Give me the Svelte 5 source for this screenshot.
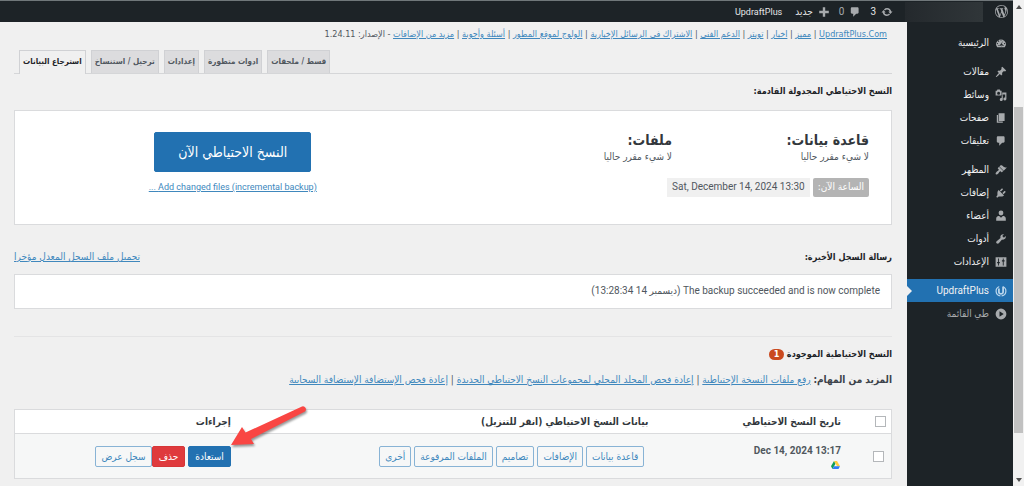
<script>
  const menu = [
    [{ label: 'الرئيسية', icon: 'dashboard' }],
    [
      { label: 'مقالات', icon: 'pin' },
      { label: 'وسائط', icon: 'media' },
      { label: 'صفحات', icon: 'pages' },
      { label: 'تعليقات', icon: 'comment' }
    ],
    [
      { label: 'المظهر', icon: 'brush' },
      { label: 'إضافات', icon: 'plug' },
      { label: 'أعضاء', icon: 'user' },
      { label: 'أدوات', icon: 'wrench' },
      { label: 'الإعدادات', icon: 'sliders' }
    ],
    [
      { label: 'UpdraftPlus', icon: 'updraft', current: true },
      { label: 'طي القائمة', icon: 'collapse', muted: true }
    ]
  ];
  const topLinks = [
    'UpdraftPlus.Com', 'مميز', 'اخبار', 'تويتر', 'الدعم الفني',
    'الاشتراك في الرسائل الإخبارية', 'الولوج لموقع المطور', 'أسئلة وأجوبة', 'مزيد من الإضافات'
  ];
  const tabs = ['استرجاع البيانات', 'ترحيل / استنساخ', 'إعدادات', 'ادوات متطورة', 'قسط / ملحقات'];
  const tasks = [
    'رفع ملفات النسخة الإحتياطية',
    'إعادة فحص المجلد المحلي لمجموعات النسخ الاحتياطي الجديدة',
    'إعادة فحص الإستضافة الإستضافة السحابية'
  ];
  const parts = ['قاعدة بيانات', 'الإضافات', 'تصاميم', 'الملفات المرفوعة', 'أخرى'];
</script>

{#snippet icon(name)}
  <svg class="icon" viewBox="0 0 20 20" aria-hidden="true">
    {#if name === 'dashboard'}
      <path fill-rule="evenodd" d="M3.76 17h12.48A8 8 0 1 0 3.76 17zM10 4a1 1 0 1 1 0 2 1 1 0 0 1 0-2zM6 6a1 1 0 1 1 0 2 1 1 0 0 1 0-2zm8 0-3 5.3A2 2 0 1 1 9.2 12zM4 10a1 1 0 1 1 0 2 1 1 0 0 1 0-2zm12 0a1 1 0 1 1 0 2 1 1 0 0 1 0-2zM5 15h10v-1H5z" />
    {:else if name === 'pin'}
      <path d="M10.44 3.02l1.82-1.82 6.36 6.35-1.83 1.82c-1.05-.68-2.48-.57-3.41.36l-.75.75c-.92.93-1.04 2.35-.35 3.41l-1.83 1.82-2.41-2.41-2.8 2.79c-.42.42-3.38 2.71-3.8 2.29s1.86-3.39 2.28-3.81l2.79-2.79L4.1 9.36l1.83-1.82c1.05.69 2.48.57 3.4-.36l.75-.75c.93-.92 1.05-2.35.36-3.41z" />
    {:else if name === 'media'}
      <path fill-rule="evenodd" d="M1 3h2l1-2h4l1 2h2v8H1zm5 1.5a2.500 2.500 0 1 0 0 5 2.500 2.500 0 0 0 0-5zM12 6h7v10.500a2.500 2.500 0 1 1-2-2.400V9h-4v8.500a2.500 2.500 0 1 1-2-2.400V12h1z" />
    {:else if name === 'pages'}
      <path d="M6 15V2h10v13zM5 16h8v2H3V5h2z" />
    {:else if name === 'comment'}
      <path d="M5 2h9c1.100 0 2 .9 2 2v7c0 1.100-.9 2-2 2h-2l-5 5v-5H5c-1.100 0-2-.9-2-2V4c0-1.100.9-2 2-2z" />
    {:else if name === 'brush'}
      <path d="M14.480 11.060 7.410 3.990l1.500-1.500c.5-.56 2.300-.47 3.510.32 1.210.8 1.430 1.280 2.910 2.100 1.180.64 2.450 1.260 4.450.85zm-.71.71L6.700 4.700 4.930 6.470c-.39.39-.39 1.020 0 1.410l1.060 1.060c.39.39.39 1.030 0 1.420-.6.6-1.430 1.110-2.210 1.690-.35.26-.7.53-1.010.84C1.430 14.230.4 16.080 1.400 17.070c.99 1 2.840-.03 4.180-1.360.31-.31.58-.66.85-1.020.57-.78 1.080-1.610 1.690-2.210.39-.39 1.020-.39 1.410 0l1.060 1.060c.39.39 1.020.39 1.410 0z" />
    {:else if name === 'plug'}
      <path d="M13.110 4.360 9.870 7.600 8 5.730l3.240-3.240c.35-.34 1.050-.2 1.560.32.52.51.66 1.210.31 1.550zm-8 1.770.91-1.120 9.010 9.010-1.190.84c-.71.71-2.630 1.160-3.820 1.160H6.140L4.900 17.260c-.59.59-1.540.59-2.120 0-.59-.58-.59-1.530 0-2.120l1.240-1.240v-3.880c0-1.130.4-3.190 1.090-3.890zm7.260 3.970 3.240-3.240c.34-.35 1.040-.21 1.550.31.52.51.66 1.210.31 1.550l-3.240 3.250z" />
    {:else if name === 'user'}
      <circle cx="10" cy="5" r="4" /><path d="M2 18v-4c0-3 3-4 5-4l3 3 3-3c2 0 5 1 5 4v4z" />
    {:else if name === 'wrench'}
      <path d="M16.680 9.770c-1.340 1.340-3.300 1.670-4.950.99l-5.410 6.520c-.99.99-2.590.99-3.580 0s-.99-2.590 0-3.570l6.520-5.420c-.68-1.650-.35-3.610.99-4.950 1.280-1.280 3.120-1.620 4.720-1.060l-2.890 2.890 2.820 2.820 2.860-2.870c.53 1.580.18 3.390-1.080 4.650z" />
    {:else if name === 'sliders'}
      <path fill-rule="evenodd" d="M1 2h18v16H1zm4 2v6H3.500v2H5v4h1.500v-4H8v-2H6.500V4zm8 0v3h-1.500v2H13v7h1.500V9H16V7h-1.500V4z" />
    {:else if name === 'updraft'}
      <path d="M7 1.500A9 9 0 0 0 9 19v-2A7 7 0 0 1 7 3.700zM13 1.500A9 9 0 0 1 11 19v-2A7 7 0 0 0 13 3.700z" /><path d="M5 6h3v6q2 3 4 0V3h3v9c-1 6-10 5-10 0z" />
    {:else if name === 'collapse'}
      <path fill-rule="evenodd" d="M10 1a9 9 0 1 1 0 18 9 9 0 0 1 0-18zM7.500 5.500v9l7-4.500z" />
    {:else if name === 'update'}
      <path d="M10.200 3.280c3.530 0 6.430 2.610 6.920 6h2.080l-3.500 4-3.500-4h2.320a4.439 4.439 0 0 0-4.320-3.450c-1.450 0-2.730.71-3.540 1.780L4.950 5.660a6.965 6.965 0 0 1 5.250-2.380zm-.4 13.440c-3.520 0-6.430-2.610-6.920-6H.8l3.500-4 3.500 4H5.480a4.439 4.439 0 0 0 4.320 3.450c1.450 0 2.730-.71 3.540-1.780l1.710 1.950a6.965 6.965 0 0 1-5.250 2.380z" />
    {:else if name === 'plus'}
      <path d="M8 2h4v6h6v4h-6v6H8v-6H2V8h6z" />
    {:else if name === 'wordpress'}
      <path d="M20 10c0-5.510-4.490-10-10-10C4.480 0 0 4.490 0 10c0 5.520 4.480 10 10 10 5.510 0 10-4.480 10-10zM7.780 15.370 4.370 6.220c.55-.02 1.170-.08 1.170-.08.5-.06.44-1.130-.06-1.110 0 0-1.450.11-2.370.11-.18 0-.37 0-.58-.01C4.120 2.690 6.870 1.110 10 1.110c2.330 0 4.450.87 6.050 2.340-.68-.11-1.650.39-1.650 1.580 0 .74.45 1.360.9 2.100.35.61.55 1.360.55 2.460 0 1.490-1.400 5-1.400 5l-3.030-8.370c.54-.02.82-.17.82-.17.5-.05.44-1.250-.06-1.220 0 0-1.440.12-2.380.12-.87 0-2.330-.12-2.330-.12-.5-.03-.56 1.200-.06 1.220l.92.08 1.260 3.410zM17.410 10c.24-.64.74-1.870.43-4.250.7 1.290 1.050 2.710 1.050 4.250 0 3.290-1.730 6.240-4.400 7.780.97-2.590 1.940-5.200 2.920-7.780zM6.100 18.090C3.120 16.650 1.110 13.530 1.110 10c0-1.300.23-2.480.72-3.590C3.250 10.300 4.670 14.200 6.100 18.090zm4.030-6.630 2.580 6.980c-.86.29-1.760.45-2.710.45-.79 0-1.570-.11-2.290-.33.810-2.380 1.620-4.740 2.420-7.100z" />
    {/if}
  </svg>
{/snippet}

<div class="screen" dir="rtl">
  <div class="scrollbar" aria-hidden="true">
    <span class="up"></span>
    <span class="thumb"></span>
    <span class="down"></span>
  </div>

  <div class="admin">
    <header class="bar">
      <a class="logo" href="#wp" aria-label="WordPress">{@render icon('wordpress')}</a>
      <span class="site"></span>
      <a href="#updates">{@render icon('update')}3</a>
      <a class="dim" href="#comments">{@render icon('comment')}0</a>
      <a href="#new">{@render icon('plus')}جديد</a>
      <a class="last" href="#updraft">UpdraftPlus</a>
    </header>

    <div class="columns">
      <nav class="side">
        {#each menu as group}
          <ul>
            {#each group as item}
              <li>
                <a href="#menu" class:current={item.current} class:muted={item.muted}>
                  {@render icon(item.icon)}<span>{item.label}</span>
                </a>
              </li>
            {/each}
          </ul>
        {/each}
      </nav>

      <main>
        <p class="links">
          {#each topLinks as link, i}{#if i}{' | '}{/if}<a href="#top">{link}</a>{/each} - الإصدار: 1.24.11
        </p>

        <nav class="tabs">
          {#each [...tabs].reverse() as tab}
            <a href="#tab" class:active={tab === tabs[0]}>{tab}</a>
          {/each}
        </nav>

        <h2 class="first">النسخ الاحتياطي المجدولة القادمة:</h2>
        <section class="panel">
          <div class="schedule">
            <div>
              <h3>قاعدة بيانات:</h3>
              <p>لا شيء مقرر حاليا</p>
            </div>
            <div>
              <h3>ملفات:</h3>
              <p>لا شيء مقرر حاليا</p>
            </div>
            <div class="clock">
              <span class="tag">الساعة الآن:</span>
              <span class="time" dir="ltr">Sat, December 14, 2024 13:30</span>
            </div>
          </div>
          <div class="now">
            <button class="backup">النسخ الاحتياطي الآن</button>
            <a href="#incremental">Add changed files (incremental backup) ...</a>
          </div>
        </section>

        <div class="log-head">
          <h2>رسالة السجل الأخيرة:</h2>
          <a href="#log">تحميل ملف السجل المعدل مؤخرا</a>
        </div>
        <p class="log">The backup succeeded and is now complete (ديسمبر 14 13:28:34)</p>

        <div class="existing">
          <h2>النسخ الاحتياطية الموجودة <span class="count">1</span></h2>
          <p class="tasks">
            <strong>المزيد من المهام:</strong>
            {#each tasks as task, i}{#if i}{' | '}{/if}<a href="#task">{task}</a>{/each}
          </p>
        </div>

        <table>
          <thead>
            <tr>
              <th class="pick"><input type="checkbox" aria-label="تحديد الكل" /></th>
              <th class="date">تاريخ النسخ الاحتياطي</th>
              <th class="data">بيانات النسخ الاحتياطي (انقر للتنزيل)</th>
              <th>إجراءات</th>
            </tr>
          </thead>
          <tbody>
            <tr>
              <td class="pick"><input type="checkbox" aria-label="Dec 14, 2024 13:17" /></td>
              <td class="date">
                <strong dir="ltr">Dec 14, 2024 13:17</strong>
                <svg class="drive" viewBox="0 0 24 21" role="img" aria-label="Google Drive">
                  <path fill="#0f9d58" d="M8 0 0 14l4 7L12 7z" />
                  <path fill="#ffcd40" d="M8 0h8l8 14h-8z" />
                  <path fill="#2f7cf6" d="M8 14h16l-4 7H4z" />
                </svg>
              </td>
              <td class="data">
                <div class="buttons">
                  {#each parts as part}<button>{part}</button>{/each}
                </div>
              </td>
              <td>
                <div class="actions">
                  <button class="restore">استعادة</button>
                  <button class="delete">حذف</button>
                  <button class="view">سجل عرض</button>
                  <svg class="arrow" viewBox="0 0 80 48" aria-hidden="true">
                    <path d="M74 3.500a3 3 0 0 1 3 5L23 36l3 5L3 42l11-18 3.500 5.500z" />
                  </svg>
                </div>
              </td>
            </tr>
          </tbody>
        </table>
      </main>
    </div>
  </div>
</div>

<style>
  :global(body) { margin: 0; background: #f0f0f1; overflow: hidden; }
  .screen {
    display: flex;
    min-height: 100vh;
    font: 10px/14px "DejaVu Sans Condensed", "DejaVu Sans", sans-serif;
    color: #50575e;
    background: #f0f0f0;
  }
  .bar, .side, .time, .log, .date strong, .now > a { font-family: Roboto, "DejaVu Sans Condensed", "DejaVu Sans", sans-serif; }
  h2, h3, p, ul { margin: 0; padding: 0; }
  a { color: #4088bd; }
  button { font: inherit; cursor: pointer; }
  .icon { width: 12px; height: 12px; fill: #a7aaad; flex: none; }

  .scrollbar {
    width: 11px;
    flex: none;
    box-sizing: border-box;
    display: grid;
    grid-template-rows: 102fr 327fr 49fr;
    justify-items: center;
    padding: 5px 1px 4px;
    background: #f1f1f1;
  }
  .thumb { width: 100%; background: #c1c1c1; }
  .up, .down { border: 3px solid transparent; width: 0; height: 0; }
  .up { border-top: 0; border-bottom: 4px solid #505050; }
  .down { border-bottom: 0; border-top: 4px solid #505050; align-self: end; }

  .admin { flex: 1; min-width: 0; display: flex; flex-direction: column; }
  .bar {
    display: flex;
    align-items: center;
    height: 21px;
    padding-right: 5px;
    background: #1d2327;
    border-top: 1px solid #70777a;
  }
  .bar a { display: flex; align-items: center; gap: 5px; color: #e4e5e6; text-decoration: none; margin-left: 9px; }
  .bar .logo { margin-left: 12px; }
  .bar .last { margin-right: 4px; font-size: 9px; }
  .logo .icon { width: 13px; height: 13px; }
  .bar .dim { color: #a7aaad; }
  .site { width: 78px; height: 20px; margin-left: 12px; background: linear-gradient(to left, #303639, #24292d); }

  .columns { flex: 1; display: flex; }
  .side { width: 106px; flex: none; background: #1d2327; padding-top: 9px; }
  .side ul { list-style: none; margin-bottom: 6px; }
  .side a {
    display: flex;
    align-items: center;
    gap: 6px;
    height: 23px;
    padding-right: 6px;
    color: #f0f0f1;
    text-decoration: none;
    position: relative;
  }
  .side .current { background: #2271b1; }
  .side .current .icon { fill: #b8d5ec; }
  .side .current::after {
    content: "";
    position: absolute;
    left: 0;
    border: 5px solid transparent;
    border-right: 0;
    border-left-color: #f0f0f1;
  }
  .side .muted { color: #a7aaad; }

  main { flex: 1; min-width: 0; padding: 5px 15px 7px 14px; }
  .links { padding-right: 5px; font-size: 9px; }
  .tabs {
    display: flex;
    justify-content: flex-end;
    gap: 5px;
    margin-top: 9px;
    padding-left: 5px;
    border-bottom: 1px solid #d5d6d8;
  }
  .tabs a {
    padding: 4px 3px;
    border: 1px solid #d0d1d4;
    border-bottom: 0;
    background: #dcdcde;
    color: #50575e;
    font-size: 8px;
    font-weight: bold;
    text-decoration: none;
  }
  .tabs .active { background: #f0f0f0; color: #1d2327; margin-bottom: -1px; padding-bottom: 5px; }
  h2 { font-size: 9px; line-height: 16px; color: #1d2327; }
  .first { margin: 9px 0 11px; }

  .panel {
    display: grid;
    grid-template-columns: 49fr 51fr;
    border: 1px solid #dadbdd;
    background: #fff;
    padding: 20px 22px 27px 0;
  }
  .schedule { display: grid; grid-template-columns: 197px 1fr; align-content: start; }
  h3 { font-size: 14px; line-height: 18px; color: #32373c; }
  .schedule p { margin-top: 1px; }
  .clock { grid-column: 1 / -1; display: flex; gap: 3px; margin-top: 14px; }
  .clock span { padding: 2px 5px 3px; background: #f0f0f0; }
  .clock .tag { background: #b4b4b4; color: #fff; border-radius: 2px; }
  .now { display: flex; flex-direction: column; align-items: center; gap: 8px; padding-top: 1px; font-size: 9px; }
  .backup {
    padding: 10px 23px;
    border: 1px solid #2271b1;
    border-radius: 2px;
    background: #2271b1;
    color: #fff;
    font-size: 14px;
    line-height: 18px;
  }

  .log-head { display: flex; justify-content: space-between; align-items: center; margin: 24px 0 9px; }
  .log { border: 1px solid #dadbdd; background: #fff; padding: 9px 11px 10px; }
  .existing { margin: 27px 0 22px; border-top: 1px solid #e4e4e5; padding-top: 9px; }
  .count {
    display: inline-block;
    width: 15px;
    border-radius: 6px;
    background: #ca4a1f;
    color: #fff;
    line-height: 11px;
    text-align: center;
  }
  .tasks { margin-top: 11px; }
  .tasks strong { color: #3c434a; }

  table { width: 100%; table-layout: fixed; border: 1px solid #dadbdd; border-spacing: 0; background: #fff; }
  th, td { padding: 0; text-align: right; box-sizing: border-box; }
  th { height: 23px; color: #32373c; }
  td { height: 45px; background: #f6f7f7; border-top: 1px solid #dadbdd; }
  .pick { width: 47px; }
  .date { width: 22%; padding-right: 3px; }
  .data { width: 48%; padding-right: 3px; }
  input {
    appearance: none;
    display: block;
    width: 11px;
    height: 11px;
    margin: 0 5px 0 0;
    border: 1px solid #b4b7ba;
    background: #fff;
  }
  td input { margin-right: 7px; }
  .date strong { display: block; text-align: right; }
  .drive { display: block; width: 9px; height: 8px; margin: 3px 1px 0 0; }
  .buttons, .actions { display: flex; position: relative; }
  .buttons { gap: 3px; padding-right: 4px; }
  td button {
    padding: 2px 5px;
    border: 1px solid #88b3d5;
    border-radius: 2px;
    background: #f6f7f7;
    color: #4088bd;
    line-height: 15px;
  }
  td .restore { background: #2271b1; border-color: #2271b1; color: #fff; margin-left: 3px; padding: 2px 6px; }
  td .delete { background: #df3a3d; border-color: #d63638; color: #fff; padding: 2px 6px; }
  .arrow {
    position: absolute;
    right: -77px;
    top: -43px;
    width: 80px;
    height: 48px;
    fill: #f94643;
    filter: drop-shadow(1px 2px 1px rgb(0 0 0 / 40%));
  }
</style>
